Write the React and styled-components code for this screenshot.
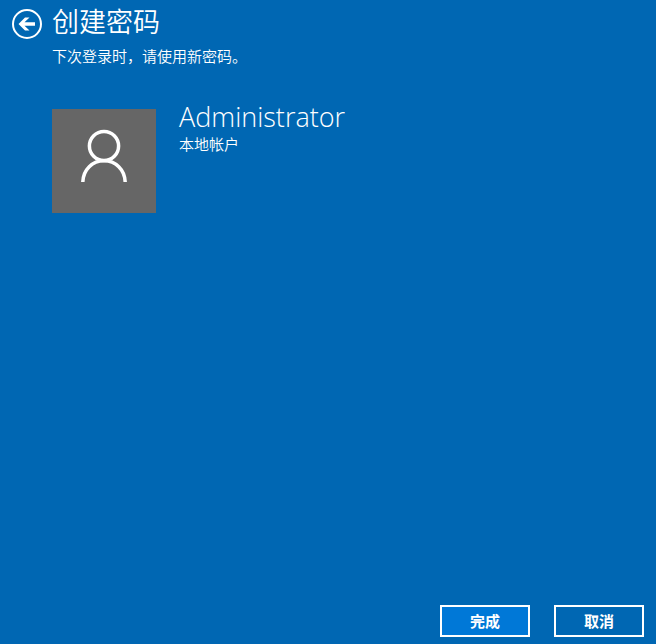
import React from "react";
import styled, { createGlobalStyle } from "styled-components";

const GlobalStyle = createGlobalStyle`
  * { box-sizing: border-box; }
  body {
    margin: 0;
    background: #0067b3;
    color: #fff;
    font-family: "Open Sans", "Noto Sans CJK SC", sans-serif;
    font-size: 15px;
  }
`;

const Page = styled.div`
  display: flex;
  flex-direction: column;
  min-height: 100vh;
  padding: 3px 12px 7px;
`;

const Header = styled.header`
  display: grid;
  grid-template-columns: 30px 1fr;
  column-gap: 10px;
`;

const BackButton = styled.button`
  width: 30px;
  height: 30px;
  margin-top: 6px;
  padding: 0;
  border: 0;
  background: none;
  color: inherit;

  svg { display: block; }
`;

const Title = styled.h1`
  margin: 0;
  font-family: "Noto Sans CJK SC", sans-serif;
  font-size: 27px;
  font-weight: 350;
  line-height: 36px;
`;

const Hint = styled.p`
  margin: 7px 0 0;
  font-family: "Noto Sans CJK SC", sans-serif;
  font-weight: 350;
  line-height: 20px;
`;

const Account = styled.main`
  display: flex;
  flex: 1;
  align-items: flex-start;
  gap: 23px;
  padding: 43px 0 0 40px;
`;

const Avatar = styled.div`
  flex: none;
  width: 104px;
  height: 104px;
  background: #666;

  svg { display: block; }
`;

const Details = styled.div`
  display: flex;
  flex-direction: column;
  margin-top: -11px;
`;

const Name = styled.h2`
  margin: 0;
  font-size: 27px;
  font-weight: 300;
  line-height: 38px;
`;

const Kind = styled.p`
  margin: 0;
  font-family: "Noto Sans CJK SC", sans-serif;
  font-weight: 350;
  line-height: 16px;
`;

const Actions = styled.footer`
  display: flex;
  justify-content: flex-end;
  gap: 24px;
`;

const ActionButton = styled.button`
  width: 90px;
  height: 32px;
  padding: 0;
  border: 2px solid #fff;
  background: ${({ $primary }) => ($primary ? "#0078d7" : "transparent")};
  color: inherit;
  font: 700 15px/20px "Noto Sans CJK SC", sans-serif;
`;

export default function App() {
  return (
    <>
      <GlobalStyle />
      <Page>
        <Header>
          <BackButton type="button" aria-label="返回">
            <svg width="30" height="30" viewBox="0 0 30 30" aria-hidden="true">
              <circle cx="15" cy="15" r="14" fill="none" stroke="currentColor" strokeWidth="2" />
              <path d="M6.5 15L13 8.5H17.5L12.5 13.3H23V16.7H12.5L17.5 21.5H13Z" fill="currentColor" />
            </svg>
          </BackButton>
          <div>
            <Title>创建密码</Title>
            <Hint>下次登录时，请使用新密码。</Hint>
          </div>
        </Header>
        <Account>
          <Avatar>
            <svg width="104" height="104" viewBox="0 0 104 104" fill="none" stroke="#fff" strokeWidth="3.5" aria-hidden="true">
              <circle cx="52" cy="37" r="14.6" />
              <path d="M30.8 73C31.2 60.5 40.5 51.7 52 51.7S72.8 60.5 73.2 73" />
            </svg>
          </Avatar>
          <Details>
            <Name>Administrator</Name>
            <Kind>本地帐户</Kind>
          </Details>
        </Account>
        <Actions>
          <ActionButton type="button" $primary>完成</ActionButton>
          <ActionButton type="button">取消</ActionButton>
        </Actions>
      </Page>
    </>
  );
}
